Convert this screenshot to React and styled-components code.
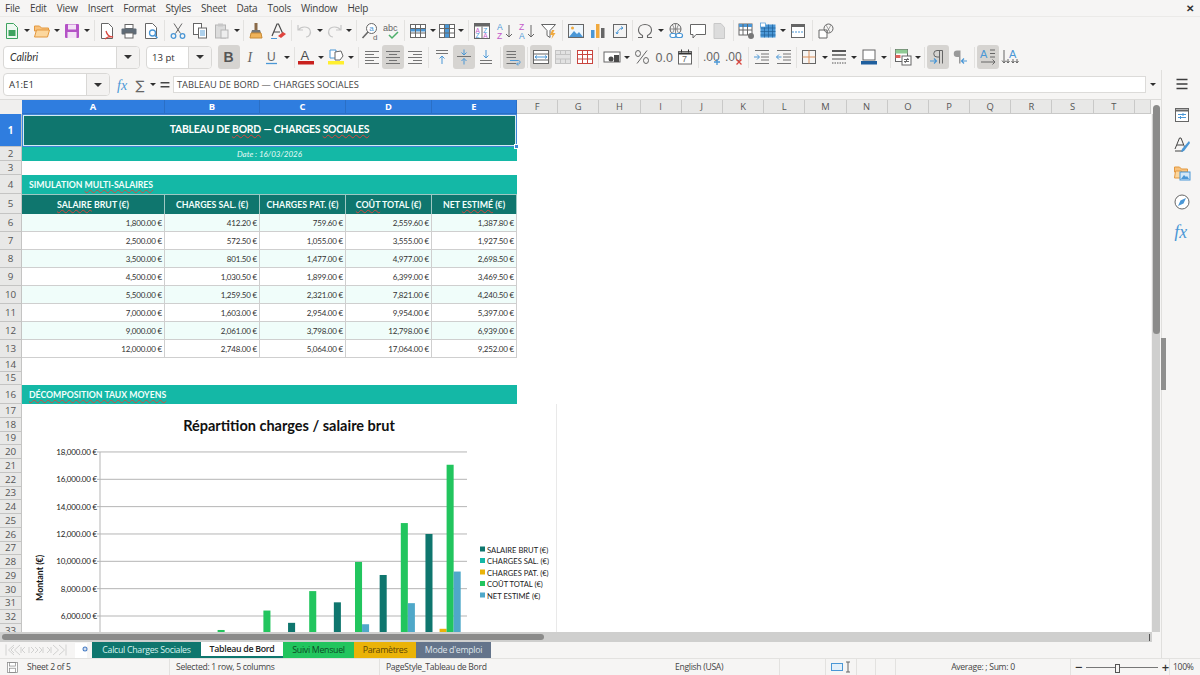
import React from 'react';
import styled, { createGlobalStyle } from 'styled-components';

const GlobalStyle = createGlobalStyle`
  html, body { margin: 0; padding: 0; background: #f6f5f4; }
  body { font-family: "Open Sans", "Noto Sans", sans-serif; overflow: hidden; }
  * { box-sizing: border-box; }
`;

// ---------- window shell ----------
const Page = styled.div`
  width: 1200px;
  height: 675px;
  display: flex;
  flex-direction: column;
  background: #f6f5f4;
  color: #3d3d3d;
  overflow: hidden;
`;

const MenuBar = styled.div`
  height: 17px;
  flex: none;
  display: flex;
  align-items: center;
  justify-content: space-between;
  padding: 0 6px 1px 5px;
  border-bottom: 1px solid #ebeae8;
  font-size: 10px;
  letter-spacing: -0.25px;
`;

const MenuList = styled.div`
  display: flex;
  gap: 10.1px;
`;

const CloseButton = styled.span`
  font-size: 10px;
  font-weight: 700;
  color: #333;
  line-height: 1;
`;

const Toolbar = styled.div`
  height: ${(p) => p.$h}px;
  flex: none;
  display: flex;
  align-items: center;
  padding-left: ${(p) => p.$pad}px;
`;

const IconButton = styled.div`
  width: ${(p) => p.$w}px;
  height: 24px;
  flex: none;
  display: flex;
  align-items: center;
  justify-content: center;
  border-radius: 3px;
  background: ${(p) => (p.$active ? '#d6d4d1' : 'transparent')};
`;

const Arrow = styled.div`
  width: ${(p) => p.$w}px;
  flex: none;
  display: flex;
  justify-content: center;
  &::after {
    content: '';
    border-left: 3px solid transparent;
    border-right: 3px solid transparent;
    border-top: 3px solid #2e2e2e;
  }
`;

const Separator = styled.div`
  width: ${(p) => p.$w}px;
  height: 21px;
  flex: none;
  display: flex;
  justify-content: center;
  &::after {
    content: '';
    width: 1px;
    background: #e3e2e0;
  }
`;

const Combo = styled.div`
  width: ${(p) => p.$w}px;
  height: 23px;
  margin-right: ${(p) => p.$mr || 0}px;
  flex: none;
  display: flex;
  border: 1px solid #d9d8d6;
  border-radius: 4px;
  overflow: hidden;
  background: #fff;
`;

const ComboText = styled.div`
  flex: 1;
  display: flex;
  align-items: center;
  padding-left: ${(p) => p.$pad}px;
  font-family: ${(p) => (p.$italic ? '"Lato", sans-serif' : 'inherit')};
  font-style: ${(p) => (p.$italic ? 'italic' : 'normal')};
  font-size: ${(p) => (p.$italic ? 10.5 : 9.6)}px;
  color: #333;
`;

const ComboButton = styled.div`
  width: 23px;
  flex: none;
  display: flex;
  align-items: center;
  justify-content: center;
  background: #f3f2f1;
  border-left: 1px solid #d9d8d6;
  &::after {
    content: '';
    border-left: 4px solid transparent;
    border-right: 4px solid transparent;
    border-top: 4px solid #333;
  }
`;

// ---------- workspace ----------
const Workspace = styled.div`
  flex: 1;
  min-height: 0;
  display: flex;
`;

const MainColumn = styled.div`
  width: 1161px;
  flex: none;
  display: flex;
  flex-direction: column;
`;

const FormulaBar = styled.div`
  height: 29px;
  flex: none;
  display: flex;
  align-items: center;
  padding-left: 3px;
`;

const FormulaInput = styled.div`
  width: 973px;
  height: 17px;
  flex: none;
  display: flex;
  align-items: center;
  padding-left: 3px;
  background: #fff;
  border: 1px solid #dcdbd9;
  font-size: 9.3px;
  color: #444;
  white-space: nowrap;
`;

const SheetArea = styled.div`
  height: 533px;
  flex: none;
  display: flex;
  border-top: 1px solid #dcdbd9;
`;

const Sheet = styled.div`
  width: 1151px;
  flex: none;
  display: flex;
  flex-direction: column;
  background: #fff;
`;

const ColumnHeader = styled.div`
  height: 14px;
  flex: none;
  display: flex;
`;

const Corner = styled.div`
  width: 22px;
  flex: none;
  background: #f0efee;
`;

const ColHead = styled.div`
  width: ${(p) => p.$w}px;
  flex: none;
  display: flex;
  align-items: center;
  justify-content: center;
  font-size: 9.4px;
  font-weight: ${(p) => (p.$selected ? 700 : 400)};
  color: ${(p) => (p.$selected ? '#fff' : '#555')};
  background: ${(p) => (p.$selected ? '#2f7ddf' : '#e8e8e7')};
  border-right: 1px solid ${(p) => (p.$selected ? '#2a6fc6' : '#c9c9c8')};
  border-bottom: 1px solid ${(p) => (p.$selected ? '#2a6fc6' : '#c9c9c8')};
`;

const GridBody = styled.div`
  flex: 1;
  min-height: 0;
  position: relative;
  overflow: hidden;
`;

const SheetRow = styled.div`
  height: ${(p) => p.$h}px;
  display: flex;
`;

const RowHead = styled.div`
  width: 22px;
  flex: none;
  display: flex;
  align-items: center;
  justify-content: center;
  font-size: 9.8px;
  font-weight: ${(p) => (p.$selected ? 700 : 400)};
  color: ${(p) => (p.$selected ? '#fff' : '#555')};
  background: ${(p) => (p.$selected ? '#2f7ddf' : '#e8e8e7')};
  border-right: 1px solid #c4c4c3;
  border-bottom: 1px solid #c4c4c3;
`;

const TitleCell = styled.div`
  width: 495px;
  flex: none;
  position: relative;
  display: flex;
  align-items: center;
  justify-content: center;
  padding-bottom: 3px;
  background: #0f766e;
  color: #fff;
  font-family: "Lato", sans-serif;
  font-size: 10.4px;
  font-weight: 700;
  letter-spacing: -0.2px;
  border: 1px solid #fff;
  outline: 1px solid #3f86d8;
  outline-offset: -1px;
  box-shadow: inset 0 0 0 1px #d4ecf4;
`;

const SelectionHandle = styled.span`
  position: absolute;
  right: -3px;
  bottom: -3px;
  width: 5px;
  height: 5px;
  background: #3f86d8;
  border: 1px solid #fff;
  z-index: 2;
`;

const DateCell = styled.div`
  width: 495px;
  flex: none;
  display: flex;
  align-items: center;
  justify-content: center;
  background: #14b8a6;
  color: #e6fbf7;
  font-family: "Lato", sans-serif;
  font-size: 8px;
  font-style: italic;
`;

const SectionCell = styled.div`
  width: 495px;
  flex: none;
  display: flex;
  align-items: center;
  padding-left: 7px;
  background: #14b8a6;
  color: #f2fffc;
  font-family: "Lato", sans-serif;
  font-size: 8.7px;
  font-weight: 700;
`;

const HeadCell = styled.div`
  width: ${(p) => p.$w}px;
  flex: none;
  display: flex;
  align-items: center;
  justify-content: center;
  background: #0f766e;
  color: #f2fffc;
  font-family: "Lato", sans-serif;
  font-size: 8.8px;
  font-weight: 700;
  white-space: nowrap;
  border-right: 1px solid #9fc8c3;
  border-top: 1px solid #9fc8c3;
`;

const DataCell = styled.div`
  width: ${(p) => p.$w}px;
  flex: none;
  display: flex;
  align-items: center;
  justify-content: flex-end;
  padding-right: 2px;
  background: ${(p) => (p.$alt ? '#f0fdfa' : '#fff')};
  color: #333;
  font-family: "Lato", sans-serif;
  font-size: 8px;
  letter-spacing: -0.2px;
  white-space: nowrap;
  border-right: 1px solid #cfcfcf;
  border-bottom: 1px solid #cfcfcf;
`;

const Spell = styled.span`
  text-decoration: underline wavy #d9463e 1px;
  text-underline-offset: 1px;
`;

const ChartFrame = styled.div`
  position: absolute;
  left: 22px;
  top: 290px;
  width: 535px;
  height: 240px;
  background: #fff;
  border-right: 1px solid #e9e9e9;
`;

const VScroll = styled.div`
  flex: 1;
  position: relative;
  background: #f6f5f4;
  display: flex;
  justify-content: center;
  padding: 5px 0 0 1px;
  &::before {
    content: '';
    position: absolute;
    left: 1px;
    right: 1px;
    top: 14px;
    bottom: 0;
    background: #cfcfce;
  }
`;

const VThumb = styled.div`
  width: 7px;
  height: 229px;
  position: relative;
  background: #8b8b8a;
  border-radius: 4px;
`;

const HScroll = styled.div`
  height: 10px;
  width: 1152px;
  flex: none;
  display: flex;
  align-items: center;
  justify-content: space-between;
  background: #cfcfce;
  padding: 0 2px;
`;

const HThumb = styled.div`
  width: 542px;
  height: 6px;
  background: #8b8b8a;
  border-radius: 3px;
`;

const HGrip = styled.div`
  width: 1px;
  height: 7px;
  background: #555;
`;

const TabBar = styled.div`
  flex: 1;
  display: flex;
  align-items: stretch;
`;

const TabNav = styled.div`
  width: 75px;
  flex: none;
  display: flex;
  align-items: center;
  padding-left: 5px;
`;

const TabAdd = styled.div`
  width: 17px;
  flex: none;
  display: flex;
  align-items: center;
  justify-content: flex-start;
`;

const Tab = styled.div`
  width: ${(p) => p.$w}px;
  flex: none;
  display: flex;
  align-items: center;
  justify-content: center;
  font-size: 8.8px;
  letter-spacing: -0.3px;
  font-weight: ${(p) => (p.$active ? 600 : 400)};
  color: ${(p) => p.$color};
  background: ${(p) => p.$bg};
  border-bottom: ${(p) => (p.$active ? '2px solid #0f766e' : 'none')};
  white-space: nowrap;
`;

const Sidebar = styled.div`
  flex: 1;
  position: relative;
  display: flex;
  flex-direction: column;
  align-items: center;
  padding: 4px 0 0 1px;
  border-left: 1px solid #e0dfdd;
`;

const SideButton = styled.div`
  height: 20px;
  margin-top: ${(p) => p.$mt}px;
  display: flex;
  align-items: center;
  justify-content: center;
`;

const SideHandle = styled.div`
  position: absolute;
  left: -1px;
  top: 268px;
  width: 5px;
  height: 52px;
  background: #8f8f8e;
`;

const StatusBar = styled.div`
  height: 17px;
  flex: none;
  display: flex;
  align-items: center;
  font-size: 8.6px;
  letter-spacing: -0.3px;
  color: #444;
  border-top: 1px solid #e3e2e0;
`;

const StatusCell = styled.div`
  width: ${(p) => p.$w}px;
  height: 100%;
  flex: none;
  display: flex;
  align-items: center;
  justify-content: ${(p) => p.$justify || 'flex-start'};
  padding-left: ${(p) => p.$pad || 0}px;
  border-right: ${(p) => (p.$plain ? 'none' : '1px solid #e3e2e0')};
  white-space: nowrap;
`;

const StatusLabel = styled.span`
  margin-left: 8px;
`;

const ZoomSlider = styled.div`
  flex: 1;
  height: 1px;
  margin: 0 4px;
  position: relative;
  background: #777;
  &::after {
    content: '';
    position: absolute;
    left: 29px;
    top: -3px;
    width: 3px;
    height: 7px;
    background: #f6f5f4;
    border: 1px solid #555;
  }
`;

const ZoomSign = styled.span`
  font-size: 13px;
  font-weight: 600;
  color: #333;
  line-height: 1;
`;

// ---------- icons ----------
const Svg = ({ size = 18, children }) => (
  <svg width={size} height={size} viewBox="0 0 18 18" fill="none" strokeWidth="1">
    {children}
  </svg>
);

const G = '#666';
const B = '#4a97d6';
const Doc = ({ c = G, f = '#fff' }) => <path d="M3.5 1.5h7l4 4v11h-11z" fill={f} stroke={c} />;
const lines = (ys, x1, x2, c = G) => ys.map((y) => <path key={y} d={`M${x1} ${y}H${x2}`} stroke={c} strokeWidth=".9" />);
const Tiny = ({ x, y, c = G, s = 8, children }) => (
  <text x={x} y={y} fill={c} fontSize={s} fontFamily="Liberation Sans, sans-serif">
    {children}
  </text>
);
const GridIcon = ({ head, col, c = G }) => (
  <g>
    <rect x="1.5" y="2.5" width="15" height="13" fill="#fff" stroke={c} />
    {head && <rect x="1.5" y="6.5" width="15" height="3" fill={B} />}
    {col && <rect x="7" y="2.5" width="4" height="13" fill={B} />}
    <path d="M6.5 2.5v13M11.5 2.5v13M1.5 6.5h15M1.5 11h15" stroke={c} />
  </g>
);
const Pilcrow = ({ c = G }) => <path d="M13.5 2.5H8a3.2 3.2 0 0 0 0 6.5h2.5M10.5 2.5v13M13.5 2.5v13" stroke={c} />;

const ICONS = {
  new: <Svg><Doc c="#3ea35f" f="#eef8f1" /><rect x="5.5" y="8" width="7" height="6" fill="#3ea35f" /></Svg>,
  open: <Svg><path d="M1.5 4h5l2 2h7v3h-14z" fill="#f8c27d" stroke="#e3983f" /><path d="M1.5 15l2-7h13l-2 7z" fill="#fcd79e" stroke="#e3983f" /></Svg>,
  save: <Svg><rect x="2" y="2" width="14" height="14" rx="1" fill="#b452c6" /><rect x="5" y="2.5" width="8" height="5" fill="#f3e2f6" /><rect x="4.5" y="10" width="9" height="6" fill="#f3e2f6" /></Svg>,
  pdf: <Svg><Doc /><path d="M8 9c1 4 3 6 7 6-3-1-6 0-8 2" stroke="#d9463e" strokeWidth="1.3" /></Svg>,
  print: <Svg><rect x="5" y="2.5" width="8" height="4" fill="#fff" stroke={G} /><rect x="1.5" y="6.5" width="15" height="6" rx="1" fill="#5f6b76" /><rect x="5" y="11" width="8" height="5" fill="#fff" stroke={G} /></Svg>,
  preview: <Svg><Doc /><circle cx="10.5" cy="11" r="3" fill="#fff" stroke={B} strokeWidth="1.3" /><path d="M12.5 13l3 3" stroke={B} strokeWidth="1.5" /></Svg>,
  cut: <Svg><path d="M5 1.5l6.5 10M13 1.5l-6.5 10" stroke={G} /><circle cx="4.5" cy="14" r="2.3" stroke={B} strokeWidth="1.3" /><circle cx="13.5" cy="14" r="2.3" stroke={B} strokeWidth="1.3" /></Svg>,
  copy: <Svg><rect x="2.5" y="1.5" width="8" height="11" fill="#fff" stroke={G} /><rect x="7.5" y="6" width="8" height="10" fill="#fff" stroke={G} />{lines([9, 11, 13], 9, 14, B)}</Svg>,
  paste: <Svg><rect x="2.5" y="3" width="10" height="13" fill="#dcdcdc" stroke="#b5b5b5" /><rect x="5" y="1.5" width="5" height="3" fill="#c8c8c8" /><rect x="8" y="8" width="7" height="8" fill="#eee" stroke="#b5b5b5" /></Svg>,
  brush: <Svg><rect x="7.5" y="1" width="3" height="7" fill="#8a6a48" /><path d="M5 8h8l1 3H4z" fill="#777" /><path d="M4 11h10l1 5H3z" fill="#f0b35a" stroke="#c98a34" /></Svg>,
  clear: <Svg><path d="M3 14L8 2h1.5l4 9M5 10h6" stroke="#4a4a4a" strokeWidth="1.2" /><path d="M9 14l5-4 3 2-5 4z" fill="#e0453f" /><path d="M2 16.5h6" stroke={B} /></Svg>,
  undo: <Svg><path d="M3 3v5h5M3.5 8C6 4 13 4 15 8c1.5 3.5-1 7-4 7" stroke="#c7c7c7" strokeWidth="1.2" /></Svg>,
  redo: <Svg><path d="M15 3v5h-5M14.5 8C12 4 5 4 3 8c-1.5 3.5 1 7 4 7" stroke="#c7c7c7" strokeWidth="1.2" /></Svg>,
  find: <Svg><circle cx="10.5" cy="6.5" r="5" fill="#fff" stroke={G} /><path d="M7 10l-5.5 6" stroke={G} strokeWidth="1.6" /><Tiny x="8.3" y="9" c={B} s="8">a</Tiny><Tiny x="12" y="17.5" s="8">d</Tiny></Svg>,
  spell: <Svg><Tiny x="0" y="9" s="9">abc</Tiny><path d="M6 13l3 3 6-6" stroke="#4caf6a" strokeWidth="1.5" /></Svg>,
  tableRow: <Svg><GridIcon head /></Svg>,
  tableCol: <Svg><GridIcon col /></Svg>,
  sort: <Svg><rect x="1.5" y="1.5" width="15" height="15" fill="#fff" stroke={G} /><rect x="1.5" y="1.5" width="15" height="3" fill={G} /><path d="M9 4.5v12" stroke={G} /><Tiny x="2.4" y="10.5" c="#c25ac9" s="6.5">A</Tiny><Tiny x="10.2" y="10.5" c={B} s="6.5">Z</Tiny><Tiny x="2.4" y="16" c={B} s="6.5">Z</Tiny><Tiny x="10.2" y="16" c="#c25ac9" s="6.5">A</Tiny></Svg>,
  asc: <Svg><Tiny x="1" y="8" c={B} s="8.5">A</Tiny><Tiny x="1" y="16.5" c="#c25ac9" s="8.5">Z</Tiny><path d="M13 3v12M10 12l3 3 3-3" stroke={G} /></Svg>,
  desc: <Svg><Tiny x="1" y="8" c="#c25ac9" s="8.5">Z</Tiny><Tiny x="1" y="16.5" c={B} s="8.5">A</Tiny><path d="M13 3v12M10 12l3 3 3-3" stroke={G} /></Svg>,
  filter: <Svg><path d="M1.5 2.5h14l-5.5 6v7l-3-2v-5z" fill="#fff" stroke={G} /><path d="M12 8l-2 5h2.5l-1 4 4-6h-2.5l1.5-3z" fill="#f0a93e" /></Svg>,
  image: <Svg><rect x="1.5" y="2.5" width="15" height="13" fill="#eef6fc" stroke={G} /><circle cx="5.5" cy="6" r="1.5" fill="#f0a93e" /><path d="M2 15l5-6 3 3 2-2 4 5z" fill={B} /></Svg>,
  chart: <Svg><rect x="2" y="8" width="3.5" height="8" fill={B} /><rect x="7" y="2" width="3.5" height="14" fill="#f0a93e" /><rect x="12" y="6" width="3.5" height="10" fill={G} /></Svg>,
  pivot: <Svg><rect x="2.5" y="2.5" width="13" height="13" fill="#f3f3f3" stroke={G} /><path d="M6 12c0-3 3-6 6-6M10 4.5l2 1.5-2 1.5M5 10l1 2 1.5-1.5" stroke={B} /></Svg>,
  omega: <Svg><path d="M2 15.5h4.5v-2C3.5 12 2.5 10 2.5 8c0-3.5 3-5.5 6.5-5.5s6.5 2 6.5 5.5c0 2-1 4-4 5.5v2H16" stroke={G} strokeWidth="1.1" /></Svg>,
  link: <Svg><circle cx="8.5" cy="7" r="5.5" stroke={G} /><path d="M3 7h11M8.5 1.5v11M5.5 3c2 3 2 5 0 8M11.5 3c-2 3-2 5 0 8" stroke={G} strokeWidth=".7" /><rect x="3" y="11.5" width="6" height="4" rx="2" fill="#fff" stroke={B} strokeWidth="1.2" /><rect x="9" y="11.5" width="6.5" height="4" rx="2" fill="#fff" stroke={B} strokeWidth="1.2" /></Svg>,
  comment: <Svg><path d="M1.5 2.5h15v10H7l-3 3.5v-3.5H1.5z" fill="#fff" stroke={G} /></Svg>,
  header: <Svg><path d="M4 1.5h7l3.5 4v11H4z" fill="#dcdcdc" stroke="#c8c8c8" /></Svg>,
  printArea: <Svg><rect x="1" y="2" width="13" height="11" fill="#fff" stroke={G} /><rect x="1" y="2" width="13" height="3" fill={B} /><path d="M5 2v11M9.5 2v11M1 8h13" stroke={G} /><circle cx="13" cy="14" r="3" fill="#777" /></Svg>,
  freeze: <Svg><rect x="1.5" y="2.5" width="15" height="13" fill={B} /><path d="M1.5 6h15M1.5 9.5h15M1.5 13h15M5.5 2.5v13M9.5 2.5v13M13.5 2.5v13" stroke="#1f5f96" strokeWidth=".7" /><rect x="1.5" y="1" width="5" height="4" fill="#fff" stroke={B} strokeWidth=".7" /></Svg>,
  split: <Svg><rect x="2.5" y="2.5" width="13" height="13" fill="#fff" stroke={G} /><rect x="2.5" y="2.5" width="13" height="2.5" fill={G} /><path d="M3 10h12" stroke={B} strokeDasharray="2 1" /></Svg>,
  shapes: <Svg><path d="M2 8h8v8H2z" fill="#fff" stroke={G} /><circle cx="11.5" cy="6.5" r="4.5" stroke={G} /><path d="M9 3l4 7M14 3l-4 7" stroke={G} strokeWidth=".6" /></Svg>,
  bold: <Svg><text x="3.5" y="14" fontSize="14" fontWeight="700" fill="#555" fontFamily="Liberation Sans, sans-serif">B</text></Svg>,
  italic: <Svg><text x="5.5" y="14" fontSize="14" fontStyle="italic" fill={G} fontFamily="Liberation Serif, serif">I</text></Svg>,
  underline: <Svg><text x="4" y="13" fontSize="12" fill={G} fontFamily="Liberation Sans, sans-serif">U</text><path d="M3 15.5h11" stroke={B} strokeWidth="1.3" /></Svg>,
  fontColor: <Svg><text x="3.5" y="12" fontSize="13" fill="#4a4a4a" fontFamily="Liberation Sans, sans-serif">A</text><rect x="1" y="13" width="16" height="3.5" fill="#c9211e" /></Svg>,
  highlight: <Svg><path d="M3 2h6v8H3z" fill="#fff" stroke={B} /><path d="M8 4l6-1 2 5-3 4H8z" fill="#fff" stroke={G} /><rect x="1" y="13" width="16" height="3.5" fill="#ffef2f" /></Svg>,
  alignLeft: <Svg>{lines([3.5, 9.5, 15.5], 2, 16)}{lines([6.5, 12.5], 2, 11)}</Svg>,
  alignCenter: <Svg>{lines([3.5, 9.5, 15.5], 2, 16)}{lines([6.5, 12.5], 5, 13)}</Svg>,
  alignRight: <Svg>{lines([3.5, 9.5, 15.5], 2, 16)}{lines([6.5, 12.5], 7, 16)}</Svg>,
  vTop: <Svg>{lines([2.5, 5.5], 3, 15)}<path d="M9 16V8M6.5 10.5L9 8l2.5 2.5" stroke={B} /></Svg>,
  vMid: <Svg>{lines([8.5], 2, 16)}<path d="M9 1.5V7M6.5 4.5L9 7l2.5-2.5M9 16.5V10.5M6.5 13L9 10.5l2.5 2.5" stroke={B} /></Svg>,
  vBottom: <Svg>{lines([12.5, 15.5], 3, 15)}<path d="M9 2v8M6.5 7.5L9 10l2.5-2.5" stroke={B} /></Svg>,
  wrap: <Svg>{lines([3.5, 6.5, 9.5, 15.5], 1.5, 11)}<path d="M5 12.5h8.5c2 0 2 3.5 0 3.5H12M13 14.5L11.5 16l1.5 1.5" stroke={B} /></Svg>,
  merge: <Svg><rect x="1.5" y="2.5" width="15" height="13" fill="#fff" stroke={G} /><path d="M1.5 6h15M1.5 12h15" stroke={G} /><path d="M3 9h12M5 7.5L3 9l2 1.5M13 7.5L15 9l-2 1.5" stroke={B} /></Svg>,
  mergeGrey: <Svg><rect x="1.5" y="2.5" width="15" height="13" fill="#e2e2e2" stroke="#c3c3c3" /><path d="M1.5 6.5h15M1.5 11h15M6.5 2.5v4M11.5 2.5v4M6.5 11v4.5M11.5 11v4.5" stroke="#c3c3c3" /></Svg>,
  unmerge: <Svg><rect x="1.5" y="2.5" width="15" height="13" fill="#fff" stroke="#c9453f" /><path d="M1.5 6.5h15M1.5 11h15M6.5 2.5v13M11.5 2.5v13" stroke="#c9453f" /></Svg>,
  currency: <Svg><rect x="1" y="4" width="16" height="10" fill="#fff" stroke={G} /><circle cx="8" cy="11" r="2.5" fill="#4a4a4a" /><rect x="11" y="7" width="5" height="7" fill="#4a4a4a" /></Svg>,
  percent: <Svg><path d="M14 2.5L4 15.5" stroke={G} /><ellipse cx="5" cy="5.5" rx="2.5" ry="3" stroke={G} /><ellipse cx="13" cy="12.5" rx="2.5" ry="3" stroke={G} /></Svg>,
  decimal: <Svg><Tiny x="0.5" y="14" s="12.5">0.0</Tiny></Svg>,
  date: <Svg><rect x="2.5" y="3.5" width="13" height="12.5" fill="#fff" stroke={G} /><path d="M2.5 5.5h13" stroke="#333" strokeWidth="2" /><path d="M5.5 1.5v3M12.5 1.5v3" stroke="#333" /><Tiny x="6" y="14" s="9">7</Tiny></Svg>,
  addDec: <Svg><Tiny x="0" y="13" s="12">.00</Tiny><path d="M14 11v6M11 14h6" stroke={B} strokeWidth="1.3" /></Svg>,
  delDec: <Svg><Tiny x="0" y="13" s="12">.00</Tiny><path d="M11.5 11.5l5 5M16.5 11.5l-5 5" stroke="#d9463e" strokeWidth="1.3" /></Svg>,
  indent: <Svg>{lines([2.5, 15.5], 2, 16)}{lines([6, 9, 12], 8, 16)}<path d="M1 9h5M4 6.5L6.5 9 4 11.5" stroke={B} /></Svg>,
  outdent: <Svg>{lines([2.5, 15.5], 2, 16)}{lines([6, 9, 12], 8, 16)}<path d="M6.5 9h-5M4 6.5L1.5 9 4 11.5" stroke={B} /></Svg>,
  borders: <Svg><rect x="2.5" y="2.5" width="13" height="13" stroke={G} /><path d="M9 2.5v13M2.5 9h13" stroke="#d98f5a" /></Svg>,
  lineStyle: <Svg><path d="M2 3h14" stroke="#555" strokeWidth="2" /><path d="M2 7h14" stroke="#555" strokeWidth="1.5" /><path d="M2 11h14" stroke="#555" /><path d="M2 15h14" stroke="#555" strokeDasharray="1.5 1" /></Svg>,
  borderColor: <Svg><rect x="3" y="2" width="12" height="10" fill="#fff" stroke={G} /><rect x="1" y="13" width="16" height="3.5" fill="#1f5f9e" /></Svg>,
  condFormat: <Svg><rect x="1.5" y="1.5" width="12" height="12" fill="#fff" stroke={G} /><rect x="1.5" y="1.5" width="12" height="4" fill="#8fcb94" /><rect x="1.5" y="7" width="5" height="3" fill="#e0625a" /><rect x="8" y="8" width="9" height="9" fill="#fff" stroke={G} /><path d="M10 11.5h5M10 13.5h5M14 10l-3 5" stroke={G} /></Svg>,
  ltr: <Svg><Pilcrow /><path d="M1 13h6M5 10.5L7.5 13 5 15.5" stroke={B} strokeWidth="1.2" /></Svg>,
  rtl: <Svg><path d="M11 2.5H6a3.2 3.2 0 0 0 0 6.5h2v6.5h1.5v-13" fill="#999" /><path d="M16 13h-5M13 10.5L10.5 13l2.5 2.5" stroke={B} strokeWidth="1.2" /></Svg>,
  horizText: <Svg><Tiny x="1" y="10" c={B} s="11">A</Tiny><path d="M11 2h5M11 5.5h5M11 9h5" stroke={G} /><path d="M2 14h14M13.5 11.5L16 14l-2.5 2.5" stroke={G} /></Svg>,
  vertText: <Svg><Tiny x="8" y="10" c={B} s="11">A</Tiny><path d="M3 2v13M1 12.5L3 15l2-2.5M7 11v4M5.5 13L7 15l1.5-2M12 11v4M10.5 13L12 15l1.5-2M16 11v4M14.5 13L16 15l1.5-2" stroke={G} /></Svg>,
  fx: <Svg><text x="2" y="14" fontSize="14" fontStyle="italic" fill={B} fontFamily="Liberation Serif, serif">fx</text></Svg>,
  sigma: <Svg><text x="3" y="14.5" fontSize="16" fill={G} fontFamily="DejaVu Sans, sans-serif">∑</text></Svg>,
  equals: <Svg><path d="M4 6.5h10M4 11h10" stroke="#444" strokeWidth="1.5" /></Svg>,
  menu: <Svg><path d="M3.5 4.5h11M3.5 9h11M3.5 13.5h11" stroke="#3d3d3d" strokeWidth="1.4" /></Svg>,
  props: <Svg><rect x="2.5" y="2.5" width="13" height="13" fill="#fff" stroke={G} /><path d="M2.5 4.5h13" stroke={G} strokeWidth="2" /><path d="M5 8.5h8M5 11.5h8M10 7v3M7.5 10v3" stroke={B} /></Svg>,
  styles: <Svg><path d="M2 13L6.5 2H8l3.5 9M4 9h6" stroke="#444" /><path d="M2 15h8" stroke="#444" /><path d="M16 5l-7 8-1 3 3-1 6-8z" fill={B} /></Svg>,
  gallery: <Svg><path d="M1.5 3h5l2 2h6v3h-13z" fill="#f8c27d" stroke="#e3983f" /><path d="M1.5 14l1-7h6v7z" fill="#fcd79e" stroke="#e3983f" /><rect x="7" y="8" width="10" height="8" fill="#d4e8f7" stroke={B} /><path d="M8 15l3-4 2 2 1-1 2 3z" fill={B} /></Svg>,
  navigator: <Svg><circle cx="9" cy="9" r="7" fill="#fff" stroke={G} /><path d="M13 5l-2.5 5.5L5 13l2.5-5.5z" fill={B} /></Svg>,
  fxSide: <Svg size={20}><text x="2" y="15" fontSize="16" fontStyle="italic" fill={B} fontFamily="Liberation Serif, serif">fx</text></Svg>,
  statusSave: <Svg size={13}><rect x="2" y="2" width="14" height="14" fill="#fff" stroke="#888" /><rect x="5" y="2" width="8" height="5" stroke="#888" /><rect x="5" y="10" width="8" height="6" stroke="#888" /></Svg>,
  selMode: <svg width="20" height="12" viewBox="0 0 20 12" fill="none"><rect x=".5" y="2.5" width="11" height="7" fill="#e3f0fa" stroke={B} /><path d="M15 1h4M17 1v10M15 11h4" stroke={G} /></svg>,
  tabNav: (
    <svg width="62" height="14" viewBox="0 0 62 14" fill="none" stroke="#d2d2d1">
      <path d="M1 1.5v11M9 2L3.5 7 9 12M9 4L6 7l3 3M15 2L9.5 7l5.5 5M16 4v6M20 4l-3 3 3 3M24 4v6M38 4v6M42 4l3 3-3 3M46 4v6M48 2l5.5 5L48 12M54 2l5.5 5L54 12M61 1.5v11" />
      <path d="M26 4l3 3-3 3M30 4l3 3-3 3M34 4l3 3-3 3" />
    </svg>
  ),
  tabAdd: <svg width="14" height="16" viewBox="0 0 14 16"><rect x="0" y="1" width="12" height="15" fill="#fff" /><circle cx="10" cy="7" r="2.5" fill="#4a7ec4" /><path d="M8.5 7h3M10 5.5v3" stroke="#fff" /></svg>,
};

// ---------- toolbar layout: [icon, width, active] ----------
const TOP_TOOLS = [
  ['new', 20], ['a', 10], ['open', 20], ['a', 10], ['save', 20], ['a', 10], ['s', 4],
  ['pdf', 22], ['print', 22], ['preview', 22], ['s', 5],
  ['cut', 22], ['copy', 22], ['paste', 21], ['a', 9], ['s', 4],
  ['brush', 22], ['clear', 22], ['s', 4],
  ['undo', 22], ['a', 9], ['redo', 21], ['a', 8], ['s', 6],
  ['find', 22], ['spell', 21], ['s', 5],
  ['tableRow', 22], ['a', 8], ['tableCol', 20], ['a', 8], ['s', 6],
  ['sort', 22], ['asc', 23], ['desc', 22], ['filter', 21], ['s', 6],
  ['image', 22], ['chart', 21], ['pivot', 23], ['s', 3],
  ['omega', 22], ['a', 9], ['link', 22], ['comment', 21], ['header', 22], ['s', 6],
  ['printArea', 22], ['freeze', 20], ['a', 9], ['split', 22], ['s', 6],
  ['shapes', 22],
];

const FORMAT_TOOLS = [
  ['bold', 22, true], ['italic', 22], ['underline', 20], ['a', 10], ['s', 4],
  ['fontColor', 20], ['a', 10], ['highlight', 20], ['a', 10], ['s', 5],
  ['alignLeft', 21], ['alignCenter', 22, true], ['alignRight', 22], ['s', 5],
  ['vTop', 22], ['vMid', 22, true], ['vBottom', 22], ['s', 6],
  ['wrap', 22, true], ['s', 5], ['merge', 22, true], ['mergeGrey', 22], ['unmerge', 22], ['s', 5],
  ['currency', 22], ['a', 7], ['percent', 23], ['decimal', 21], ['date', 22], ['s', 5],
  ['addDec', 22], ['delDec', 22], ['s', 6],
  ['indent', 22], ['outdent', 22], ['s', 3],
  ['borders', 22], ['a', 9], ['lineStyle', 20], ['a', 10], ['borderColor', 20], ['a', 9], ['s', 5],
  ['condFormat', 20], ['a', 9], ['s', 5],
  ['ltr', 22, true], ['rtl', 22], ['s', 6],
  ['horizText', 22, true], ['vertText', 21],
];

const renderTools = (tools) =>
  tools.map(([name, w, active], i) => {
    if (name === 'a') return <Arrow key={i} $w={w} />;
    if (name === 's') return <Separator key={i} $w={w} />;
    return (
      <IconButton key={i} $w={w} $active={active}>
        {ICONS[name]}
      </IconButton>
    );
  });

// ---------- sheet data ----------
const MENUS = ['File', 'Edit', 'View', 'Insert', 'Format', 'Styles', 'Sheet', 'Data', 'Tools', 'Window', 'Help'];
const COL_WIDTHS = [143, 95, 86, 86, 85];
const LETTERS = 'FGHIJKLMNOPQRST'.split('');

const SALARIES = [
  ['1,800.00 €', '412.20 €', '759.60 €', '2,559.60 €', '1,387.80 €'],
  ['2,500.00 €', '572.50 €', '1,055.00 €', '3,555.00 €', '1,927.50 €'],
  ['3,500.00 €', '801.50 €', '1,477.00 €', '4,977.00 €', '2,698.50 €'],
  ['4,500.00 €', '1,030.50 €', '1,899.00 €', '6,399.00 €', '3,469.50 €'],
  ['5,500.00 €', '1,259.50 €', '2,321.00 €', '7,821.00 €', '4,240.50 €'],
  ['7,000.00 €', '1,603.00 €', '2,954.00 €', '9,954.00 €', '5,397.00 €'],
  ['9,000.00 €', '2,061.00 €', '3,798.00 €', '12,798.00 €', '6,939.00 €'],
  ['12,000.00 €', '2,748.00 €', '5,064.00 €', '17,064.00 €', '9,252.00 €'],
];

const SERIES = [
  { name: 'SALAIRE BRUT (€)', color: '#0f766e' },
  { name: 'CHARGES SAL. (€)', color: '#14b8a6' },
  { name: 'CHARGES PAT. (€)', color: '#eab308' },
  { name: 'COÛT TOTAL (€)', color: '#22c55e' },
  { name: 'NET ESTIMÉ (€)', color: '#4fa8c9' },
];

const toNumber = (s) => parseFloat(s.replace(/[^0-9.]/g, ''));
const valueY = (v) => 616 - (v - 6000) * 0.01367;

const Chart = () => (
  <svg width="534" height="240" viewBox="22 404 534 240" fontFamily="Lato, sans-serif">
    <text x="289" y="431" textAnchor="middle" fontSize="14.5" fontWeight="700" fill="#111">
      Répartition charges / salaire brut
    </text>
    <text transform="translate(43 578) rotate(-90)" textAnchor="middle" fontSize="8.8" fontWeight="700" fill="#111">
      Montant (€)
    </text>
    {[18000, 16000, 14000, 12000, 10000, 8000, 6000].map((v) => (
      <g key={v}>
        <path d={`M97 ${valueY(v)}H467`} stroke="#b5b5b5" />
        <text x="97" y={valueY(v) + 3} textAnchor="end" fontSize="8" letterSpacing="-.2" fill="#222">
          {v.toLocaleString('en-US')}.00 €
        </text>
      </g>
    ))}
    <path d="M100 452V650" stroke="#b5b5b5" />
    {SALARIES.map((row, g) =>
      row.map((cell, i) => {
        const y = valueY(toNumber(cell));
        return <rect key={`${g}-${i}`} x={126 + 45.8 * g + (i - 3) * 7.05} y={y} width="7.05" height={660 - y} fill={SERIES[i].color} />;
      })
    )}
    {SERIES.map((s, i) => (
      <g key={s.name}>
        <rect x="480" y={546.5 + i * 11.5} width="5" height="5" fill={s.color} />
        <text x="487" y={552.5 + i * 11.5} fontSize="7.6" fill="#222">
          {s.name}
        </text>
      </g>
    ))}
  </svg>
);

const emptyRows = Array.from({ length: 17 }, (_, i) => i + 17);

const App = () => (
  <Page>
    <GlobalStyle />
    <MenuBar>
      <MenuList>
        {MENUS.map((m) => (
          <span key={m}>{m}</span>
        ))}
      </MenuList>
      <CloseButton>✕</CloseButton>
    </MenuBar>

    <Toolbar $h={27} $pad={2}>
      {renderTools(TOP_TOOLS)}
    </Toolbar>

    <Toolbar $h={26} $pad={3}>
      <Combo $w={137} $mr={6}>
        <ComboText $pad={6} $italic>Calibri</ComboText>
        <ComboButton />
      </Combo>
      <Combo $w={66} $mr={6}>
        <ComboText $pad={5}>13 pt</ComboText>
        <ComboButton />
      </Combo>
      {renderTools(FORMAT_TOOLS)}
    </Toolbar>

    <Workspace>
      <MainColumn>
        <FormulaBar>
          <Combo $w={107} $mr={5}>
            <ComboText $pad={5}>A1:E1</ComboText>
            <ComboButton />
          </Combo>
          <IconButton $w={18}>{ICONS.fx}</IconButton>
          <IconButton $w={15}>{ICONS.sigma}</IconButton>
          <Arrow $w={9} />
          <IconButton $w={16}>{ICONS.equals}</IconButton>
          <FormulaInput>TABLEAU DE BORD — CHARGES SOCIALES</FormulaInput>
          <Arrow $w={13} />
        </FormulaBar>

        <SheetArea>
          <Sheet>
            <ColumnHeader>
              <Corner />
              {COL_WIDTHS.map((w, i) => (
                <ColHead key={i} $w={w} $selected>
                  {'ABCDE'[i]}
                </ColHead>
              ))}
              {LETTERS.map((l) => (
                <ColHead key={l} $w={41.2}>
                  {l}
                </ColHead>
              ))}
              <ColHead $w={16} />
            </ColumnHeader>

            <GridBody>
              <SheetRow $h={33}>
                <RowHead $selected>1</RowHead>
                <TitleCell>
                  <span>
                    TABLEAU DE <Spell>BORD</Spell> — CHARGES <Spell>SOCIALES</Spell>
                  </span>
                  <SelectionHandle />
                </TitleCell>
              </SheetRow>
              <SheetRow $h={14}>
                <RowHead>2</RowHead>
                <DateCell>Date : 16/03/2026</DateCell>
              </SheetRow>
              <SheetRow $h={14}>
                <RowHead>3</RowHead>
              </SheetRow>
              <SheetRow $h={19}>
                <RowHead>4</RowHead>
                <SectionCell>
                  <span>
                    SIMULATION <Spell>MULTI-SALAIRES</Spell>
                  </span>
                </SectionCell>
              </SheetRow>
              <SheetRow $h={20}>
                <RowHead>5</RowHead>
                <HeadCell $w={143}>
                  <span>
                    <Spell>SALAIRE</Spell> BRUT (€)
                  </span>
                </HeadCell>
                <HeadCell $w={95}>CHARGES SAL. (€)</HeadCell>
                <HeadCell $w={86}>CHARGES PAT. (€)</HeadCell>
                <HeadCell $w={86}>
                  <span>
                    <Spell>COÛT</Spell> TOTAL (€)
                  </span>
                </HeadCell>
                <HeadCell $w={85}>
                  <span>
                    NET <Spell>ESTIMÉ</Spell> (€)
                  </span>
                </HeadCell>
              </SheetRow>
              {SALARIES.map((row, r) => (
                <SheetRow key={r} $h={18}>
                  <RowHead>{r + 6}</RowHead>
                  {row.map((cell, c) => (
                    <DataCell key={c} $w={COL_WIDTHS[c]} $alt={r % 2 === 0}>
                      {cell}
                    </DataCell>
                  ))}
                </SheetRow>
              ))}
              <SheetRow $h={13.5}>
                <RowHead>14</RowHead>
              </SheetRow>
              <SheetRow $h={13.5}>
                <RowHead>15</RowHead>
              </SheetRow>
              <SheetRow $h={19}>
                <RowHead>16</RowHead>
                <SectionCell>
                  <Spell>DÉCOMPOSITION TAUX MOYENS</Spell>
                </SectionCell>
              </SheetRow>
              {emptyRows.map((n) => (
                <SheetRow key={n} $h={13.75}>
                  <RowHead>{n}</RowHead>
                </SheetRow>
              ))}
              <ChartFrame>
                <Chart />
              </ChartFrame>
            </GridBody>
          </Sheet>
          <VScroll>
            <VThumb />
          </VScroll>
        </SheetArea>

        <HScroll>
          <HThumb />
          <HGrip />
        </HScroll>

        <TabBar>
          <TabNav>{ICONS.tabNav}</TabNav>
          <TabAdd>{ICONS.tabAdd}</TabAdd>
          <Tab $w={109} $bg="#0f766e" $color="#d5f3ee">Calcul Charges Sociales</Tab>
          <Tab $w={82} $bg="#fff" $color="#222" $active>Tableau de Bord</Tab>
          <Tab $w={71} $bg="#22c55e" $color="#0d4a25">Suivi Mensuel</Tab>
          <Tab $w={62} $bg="#eab308" $color="#5c4506">Paramètres</Tab>
          <Tab $w={75} $bg="#64748b" $color="#dfe4ea">Mode d'emploi</Tab>
        </TabBar>
      </MainColumn>

      <Sidebar>
        <SideButton $mt={0}>{ICONS.menu}</SideButton>
        <SideButton $mt={11}>{ICONS.props}</SideButton>
        <SideButton $mt={10}>{ICONS.styles}</SideButton>
        <SideButton $mt={8}>{ICONS.gallery}</SideButton>
        <SideButton $mt={9}>{ICONS.navigator}</SideButton>
        <SideButton $mt={9}>{ICONS.fxSide}</SideButton>
        <SideHandle />
      </Sidebar>
    </Workspace>

    <StatusBar>
      <StatusCell $w={170} $pad={6}>
        {ICONS.statusSave}
        <StatusLabel>Sheet 2 of 5</StatusLabel>
      </StatusCell>
      <StatusCell $w={210} $pad={6}>Selected: 1 row, 5 columns</StatusCell>
      <StatusCell $w={257} $pad={6} $plain>PageStyle_Tableau de Bord</StatusCell>
      <StatusCell $w={143} $pad={38}>English (USA)</StatusCell>
      <StatusCell $w={46} />
      <StatusCell $w={31} $justify="center" $pad={0}>{ICONS.selMode}</StatusCell>
      <StatusCell $w={19} />
      <StatusCell $w={20} />
      <StatusCell $w={175} $justify="center">Average: ; Sum: 0</StatusCell>
      <StatusCell $w={99} $pad={4} $justify="center">
        <ZoomSign>−</ZoomSign>
        <ZoomSlider />
        <ZoomSign>+</ZoomSign>
      </StatusCell>
      <StatusCell $w={30} $pad={3} $plain>100%</StatusCell>
    </StatusBar>
  </Page>
);

export default App;
